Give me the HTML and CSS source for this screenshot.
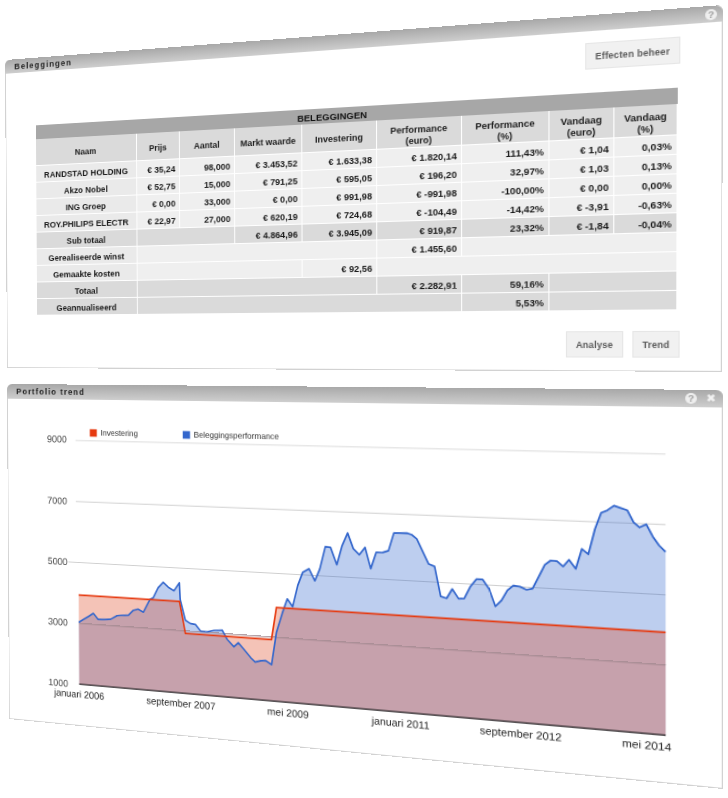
FILE: index.html
```html
<!DOCTYPE html>
<html lang="nl">
<head>
<meta charset="utf-8">
<title>Beleggingen</title>
<link rel="stylesheet" href="styles.css">
</head>
<body>
<div class="stage">
  <section class="panel panel-holdings">
    <header class="bar">
      <h2 class="bar-title">Beleggingen</h2>
      <div class="bar-icons"><span class="ico-help">?</span></div>
    </header>
    <div class="holdings-body">
      <div class="actions actions-top"><button class="btn btn-manage">Effecten beheer</button></div>
      <table class="grid">
        <colgroup>
          <col class="c1"><col class="c2"><col class="c3"><col class="c4"><col class="c5"><col class="c6"><col class="c7"><col class="c8"><col class="c9">
        </colgroup>
        <thead>
          <tr class="band"><th colspan="9">BELEGGINGEN</th></tr>
          <tr class="heads">
            <th>Naam</th><th>Prijs</th><th>Aantal</th><th>Markt waarde</th><th>Investering</th><th>Performance<br>(euro)</th><th>Performance<br>(%)</th><th>Vandaag<br>(euro)</th><th>Vandaag<br>(%)</th>
          </tr>
        </thead>
        <tbody>
          <tr><th>RANDSTAD HOLDING</th><td>€ 35,24</td><td>98,000</td><td>€ 3.453,52</td><td>€ 1.633,38</td><td>€ 1.820,14</td><td>111,43%</td><td>€ 1,04</td><td>0,03%</td></tr>
          <tr><th>Akzo Nobel</th><td>€ 52,75</td><td>15,000</td><td>€ 791,25</td><td>€ 595,05</td><td>€ 196,20</td><td>32,97%</td><td>€ 1,03</td><td>0,13%</td></tr>
          <tr><th>ING Groep</th><td>€ 0,00</td><td>33,000</td><td>€ 0,00</td><td>€ 991,98</td><td>€ -991,98</td><td>-100,00%</td><td>€ 0,00</td><td>0,00%</td></tr>
          <tr><th>ROY.PHILIPS ELECTR</th><td>€ 22,97</td><td>27,000</td><td>€ 620,19</td><td>€ 724,68</td><td>€ -104,49</td><td>-14,42%</td><td>€ -3,91</td><td>-0,63%</td></tr>
          <tr class="dark"><th>Sub totaal</th><td colspan="2"></td><td>€ 4.864,96</td><td>€ 3.945,09</td><td>€ 919,87</td><td>23,32%</td><td>€ -1,84</td><td>-0,04%</td></tr>
          <tr><th>Gerealiseerde winst</th><td colspan="4"></td><td>€ 1.455,60</td><td colspan="3"></td></tr>
          <tr><th>Gemaakte kosten</th><td colspan="3"></td><td>€ 92,56</td><td colspan="4"></td></tr>
          <tr class="dark"><th>Totaal</th><td colspan="4"></td><td>€ 2.282,91</td><td>59,16%</td><td colspan="2"></td></tr>
          <tr class="dark"><th>Geannualiseerd</th><td colspan="5"></td><td>5,53%</td><td colspan="2"></td></tr>
        </tbody>
      </table>
      <div class="actions actions-bottom"><button class="btn btn-analyse">Analyse</button><button class="btn btn-trend">Trend</button></div>
    </div>
  </section>

  <section class="panel panel-trend">
    <header class="bar">
      <h2 class="bar-title">Portfolio trend</h2>
      <div class="bar-icons"><span class="ico-help">?</span><span class="ico-close">✖</span></div>
    </header>
    <svg class="chart" viewBox="0 16 716 350" role="img" aria-label="Portfolio trend">
      <g class="gridlines">
        <line x1="79" y1="60" x2="668" y2="60"/>
        <line x1="79" y1="125.5" x2="668" y2="125.5"/>
        <line x1="70" y1="191" x2="668" y2="191"/>
        <line x1="82" y1="256.5" x2="668" y2="256.5"/>
      </g>
      <g class="areas">
        <polygon class="area-blue" points="81.8,322 81.8,255.1 92.4,248.6 98.5,244.7 103.8,250.8 118,249.8 125.4,245.4 138.3,244 143.8,238.6 149.1,236.9 155,239.8 162.4,225.9 166.1,223.8 171.6,213 177.2,206.8 182.7,211.8 189,215.2 194.9,206.5 195.7,223.8 201.2,245.1 206.7,248.3 212.2,249 217.7,255.5 224.9,255.7 232,253.9 241,252.9 246.4,262.2 253.5,269.3 258.2,264.8 264.2,271.2 271.3,279.3 275.9,283.4 281.9,281.6 287.2,281.2 293.2,284.8 298.4,251.1 304.6,231 309.8,216.4 315.3,224.2 320.7,201.9 325.8,188.4 332.2,184.4 338.2,196.5 343.3,184.1 349,161.3 354.3,161.8 360.6,178.9 366,159.5 371.6,146.5 377.3,162 383.3,167.7 389,160.1 394.6,181.1 400,164.6 406.6,164.3 412.2,162.3 417.5,144.5 430.2,144 435,145.4 439.9,149.2 446.3,162.9 451.4,173.5 457.1,175.6 462.9,204.7 468.6,206.3 474,196.8 480,205.9 485.4,205.5 491.4,193.2 497.1,185.8 502.8,185.8 508.9,194.8 514.8,211.3 520.5,205.1 526,195.2 531.6,190.1 537.7,190.9 543.8,193.5 549.3,192.2 555.1,180.1 560.6,168.6 566,164.2 571.7,164.5 577.2,169.4 582.6,162.7 588.7,171 594.2,151.7 600,156.5 605.9,132.6 611.5,116.7 617,114.2 622.9,109.7 628.9,111.6 634.6,113.5 640.2,124.6 645.4,129.1 651.2,126 657,137.3 662.3,145.1 668,151 668,322"/>
        <polygon class="area-red" points="81.8,322 81.8,226 194.9,226 201.2,259 293.2,259 298.4,226 668,226 668,322"/>
      </g>
      <line class="gridline-over" x1="82" y1="256.5" x2="668" y2="256.5"/>
      <line class="axis" x1="81.8" y1="322" x2="668" y2="322"/>
      <polyline class="line-blue" points="81.8,255.1 92.4,248.6 98.5,244.7 103.8,250.8 118,249.8 125.4,245.4 138.3,244 143.8,238.6 149.1,236.9 155,239.8 162.4,225.9 166.1,223.8 171.6,213 177.2,206.8 182.7,211.8 189,215.2 194.9,206.5 195.7,223.8 201.2,245.1 206.7,248.3 212.2,249 217.7,255.5 224.9,255.7 232,253.9 241,252.9 246.4,262.2 253.5,269.3 258.2,264.8 264.2,271.2 271.3,279.3 275.9,283.4 281.9,281.6 287.2,281.2 293.2,284.8 298.4,251.1 304.6,231 309.8,216.4 315.3,224.2 320.7,201.9 325.8,188.4 332.2,184.4 338.2,196.5 343.3,184.1 349,161.3 354.3,161.8 360.6,178.9 366,159.5 371.6,146.5 377.3,162 383.3,167.7 389,160.1 394.6,181.1 400,164.6 406.6,164.3 412.2,162.3 417.5,144.5 430.2,144 435,145.4 439.9,149.2 446.3,162.9 451.4,173.5 457.1,175.6 462.9,204.7 468.6,206.3 474,196.8 480,205.9 485.4,205.5 491.4,193.2 497.1,185.8 502.8,185.8 508.9,194.8 514.8,211.3 520.5,205.1 526,195.2 531.6,190.1 537.7,190.9 543.8,193.5 549.3,192.2 555.1,180.1 560.6,168.6 566,164.2 571.7,164.5 577.2,169.4 582.6,162.7 588.7,171 594.2,151.7 600,156.5 605.9,132.6 611.5,116.7 617,114.2 622.9,109.7 628.9,111.6 634.6,113.5 640.2,124.6 645.4,129.1 651.2,126 657,137.3 662.3,145.1 668,151"/>
      <polyline class="line-red" points="81.8,226 194.9,226 201.2,259 293.2,259 298.4,226 668,226"/>
      <g class="legend">
        <rect class="swatch-red" x="95.5" y="47.5" width="8" height="8"/>
        <text x="107.8" y="54">Investering</text>
        <rect class="swatch-blue" x="199.3" y="47.5" width="8" height="8"/>
        <text x="211.2" y="54">Beleggingsperformance</text>
      </g>
      <g class="y-labels">
        <text x="69" y="62.5">9000</text>
        <text x="69" y="129">7000</text>
        <text x="69" y="194.5">5000</text>
        <text x="69" y="260">3000</text>
        <text x="69" y="326">1000</text>
      </g>
      <g class="x-labels">
        <text x="81.6" y="336.5">januari 2006</text>
        <text x="195.7" y="336.5">september 2007</text>
        <text x="310" y="336.5">mei 2009</text>
        <text x="423.5" y="336.5">januari 2011</text>
        <text x="537.8" y="336.5">september 2012</text>
        <text x="651.4" y="336.5">mei 2014</text>
      </g>
    </svg>
  </section>
</div>
</body>
</html>
```
FILE: styles.css
```css
* { box-sizing: border-box; }
html, body { margin: 0; padding: 0; background: #fff; }
body { font-family: "Liberation Sans", Arial, sans-serif; }

.stage {
  display: grid;
  width: 728px;
  height: 798px;
  overflow: hidden;
}

.panel {
  grid-area: 1 / 1;
  align-self: start;
  justify-self: start;
  display: flex;
  flex-direction: column;
  width: 716px;
  background: #fff;
  border: 1px solid #d2d2d2;
  border-top: 0;
  border-radius: 6px 6px 0 0;
  transform-origin: 0 0;
}
.panel-holdings {
  height: 336px;
  transform: matrix3d(0.840415, -0.077939, 0, -0.00022459,
                      0.006035, 0.921015, 0, 0.00001182,
                      0, 0, 1, 0,
                      5, 60, 0, 1);
}
.panel-trend {
  height: 366px;
  transform: matrix3d(0.837535, -0.079257, 0, -0.00022471,
                      0.005533, 0.920803, 0, 0.00000765,
                      0, 0, 1, 0,
                      7, 384, 0, 1);
}

.bar {
  flex: none;
  display: flex;
  align-items: center;
  justify-content: space-between;
  height: 15px;
  margin: 0 -1px;
  padding: 0 5px 0 11px;
  border-radius: 6px 6px 0 0;
  background: linear-gradient(#a8a8a8, #cecece);
}
.panel-trend .bar { height: 16px; }
.bar-title {
  margin: 0;
  font-size: 9px;
  font-weight: 700;
  letter-spacing: 1.2px;
  color: #222;
}
.bar-icons { display: flex; gap: 7px; align-items: center; }
.ico-help {
  display: block;
  width: 10px;
  height: 10px;
  border-radius: 50%;
  background: #efefef;
  color: #a0a0a0;
  font-size: 9px;
  font-weight: 700;
  line-height: 10px;
  text-align: center;
}
.ico-close {
  display: block;
  width: 10px;
  color: #f2f2f2;
  font-family: "DejaVu Sans", sans-serif;
  font-size: 10px;
  line-height: 10px;
  text-align: center;
}

.holdings-body {
  flex: 1;
  display: flex;
  flex-direction: column;
  padding: 11px 36px 0 35px;
}
.actions { display: flex; justify-content: flex-end; gap: 8px; margin-right: -1px; }
.actions-bottom { margin-top: 19px; }

.btn {
  height: 25px;
  padding: 0;
  border: 1px solid #e6e6e6;
  background: #f1f1f1;
  color: #5c5c5c;
  font: 700 8.4px "Liberation Sans", Arial, sans-serif;
  letter-spacing: 0.15px;
}
.btn-manage { width: 83px; }
.btn-analyse { width: 51px; }
.btn-trend { width: 41px; }

.grid {
  width: 642px;
  margin-top: 22px;
  border-collapse: separate;
  border-spacing: 0;
  table-layout: fixed;
  font-size: 9.2px;
  color: #1a1a1a;
}
.grid th, .grid td {
  height: 18px;
  padding: 4px 4px 0;
  border-right: 1px solid #fff;
  border-bottom: 1px solid #fff;
  background: #efefef;
  font-weight: 700;
  line-height: 11px;
}
.grid td { text-align: right; }
.grid th { text-align: center; white-space: nowrap; }
.grid .band th {
  height: 15px;
  padding-top: 2px;
  background: #a7a7a7;
  border: 0;
  font-size: 9.5px;
  color: #111;
}
.grid .heads th { height: 29px; padding-top: 5px; background: #dadada; font-size: 9px; }
.grid .dark th, .grid .dark td { background: #dadada; }
.grid tbody th { background: #eaeaea; }
.grid tbody .dark th { background: #dadada; }
.c1 { width: 115px; }
.c2 { width: 47px; }
.c3 { width: 59px; }
.c4 { width: 70px; }
.c5 { width: 75px; }
.c6 { width: 82px; }
.c7 { width: 81px; }
.c8 { width: 58px; }
.c9 { width: 55px; }

.chart { display: block; width: 716px; height: 350px; margin-left: -1px; }
.gridlines line { stroke: #cfcfcf; stroke-width: 1; }
.gridline-over { stroke: #a98f96; stroke-width: 1; }
.area-blue { fill: #3366cc; fill-opacity: 0.32; }
.area-red { fill: #dc3912; fill-opacity: 0.3; }
.line-blue { fill: none; stroke: #3366cc; stroke-width: 1.7; stroke-linejoin: round; }
.line-red { fill: none; stroke: #e63a10; stroke-width: 1.7; stroke-linejoin: miter; }
.axis { stroke: #222; stroke-width: 1.1; }
.swatch-red { fill: #e63a10; }
.swatch-blue { fill: #3366cc; }
.legend text { font-size: 8.6px; fill: #333; }
.y-labels text { font-size: 10.4px; fill: #444; text-anchor: end; }
.x-labels text { font-size: 10.5px; fill: #222; text-anchor: middle; }
```
